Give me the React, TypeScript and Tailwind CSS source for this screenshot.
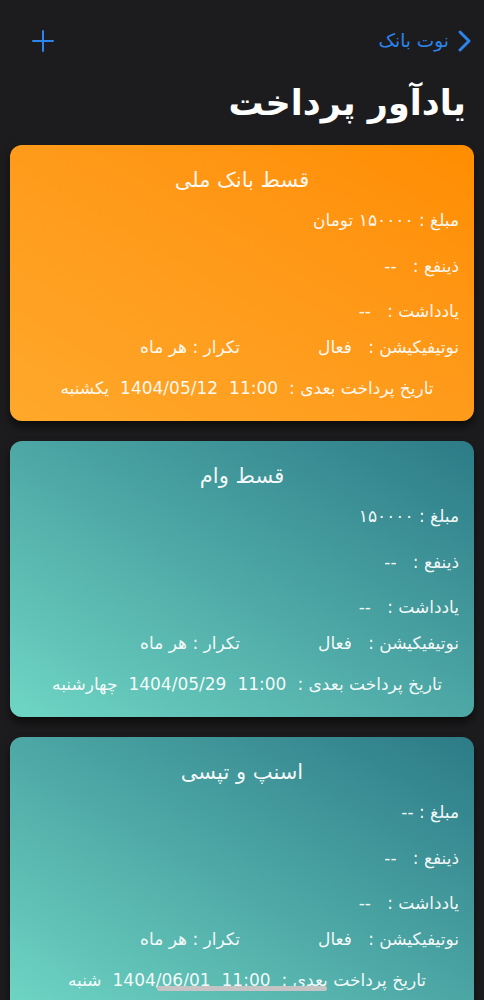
import React from "react";

type Card = {
  title: string;
  amount: string;
  date: string;
  day: string;
  variant: "orange" | "teal";
};

const cards: Card[] = [
  { title: "قسط بانک ملی", amount: "۱۵۰۰۰۰ تومان", date: "1404/05/12", day: "یکشنبه", variant: "orange" },
  { title: "قسط وام", amount: "۱۵۰۰۰۰", date: "1404/05/29", day: "چهارشنبه", variant: "teal" },
  { title: "اسنپ و تپسی", amount: "--", date: "1404/06/01", day: "شنبه", variant: "teal" },
];

function ReminderCard({ c }: { c: Card }) {
  const bg =
    c.variant === "orange"
      ? "bg-gradient-to-tr from-[#ffa82a] to-[#ff8d00]"
      : "bg-gradient-to-tr from-[#6fd6c4] to-[#2c7b87]";
  return (
    <div
      className={`${bg} mx-[10px] h-[276px] rounded-[12px] shadow-[0_6px_10px_rgba(0,0,0,0.55)] flex flex-col text-white/95`}
    >
      <div className="mt-[23px] h-[24px] leading-[24px] text-center text-[21px]">{c.title}</div>
      <div className="pr-[15px] flex flex-col text-[17px]">
        <div className="mt-[16px] h-[24px] leading-[24px]">مبلغ : {c.amount}</div>
        <div className="mt-[22px] h-[24px] leading-[24px]">ذینفع :&nbsp;&nbsp; --</div>
        <div className="mt-[21px] h-[24px] leading-[24px]">یادداشت :&nbsp;&nbsp; --</div>
        <div className="mt-[12px] h-[24px] leading-[24px] flex">
          <span className="w-[219px] shrink-0">نوتیفیکیشن :&nbsp;&nbsp; فعال</span>
          <span>تکرار : هر ماه</span>
        </div>
      </div>
      <div className="mt-[17px] h-[24px] leading-[24px] text-[17px] flex justify-center gap-[11px] pl-[10px]">
        <span>تاریخ پرداخت بعدی :</span>
        <span>11:00</span>
        <span>{c.date}</span>
        <span>{c.day}</span>
      </div>
    </div>
  );
}

export default function App() {
  return (
    <div
      dir="rtl"
      className="min-h-screen bg-[#1c1c1e] font-['DejaVu_Sans','Noto_Sans',sans-serif] pb-[40px]"
    >
      <div className="h-[62px] pt-[20px] flex items-center justify-between pl-[31px] pr-[12px]">
        <div className="flex items-center gap-[7px] text-[#2c84ec]">
          <svg width="16" height="24" viewBox="0 0 16 24" className="shrink-0">
            <path d="M4 3 L13 12 L4 21" fill="none" stroke="#2c84ec" strokeWidth="3" strokeLinecap="round" strokeLinejoin="round" />
          </svg>
          <span className="text-[18.5px] leading-none">نوت بانک</span>
        </div>
        <svg width="24" height="24" viewBox="0 0 24 24">
          <path d="M12 2 V22 M2 12 H22" stroke="#2c84ec" strokeWidth="2" strokeLinecap="round" />
        </svg>
      </div>
      <div className="h-[83px] pr-[18px] flex items-center">
        <h1 className="text-[35px] font-bold text-white leading-none">یادآور پرداخت</h1>
      </div>
      <div className="flex flex-col gap-[20px]">
        {cards.map((c, i) => (
          <ReminderCard key={i} c={c} />
        ))}
      </div>
      <div className="fixed bottom-[9px] left-[157px] w-[170px] h-[5px] rounded-full bg-[#c4c4c4]" />
    </div>
  );
}
